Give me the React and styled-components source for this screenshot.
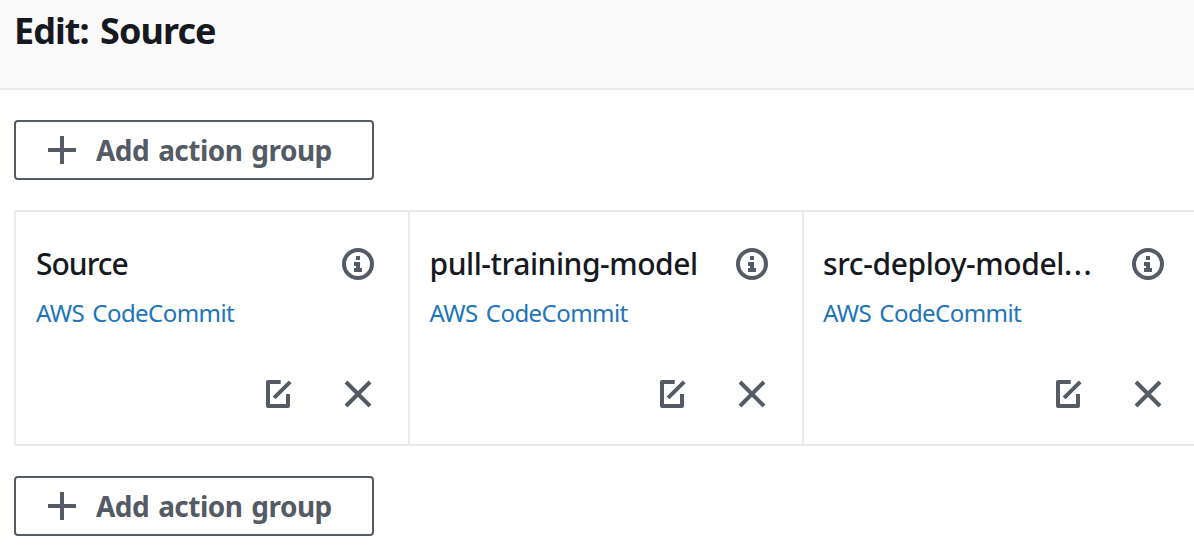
import React from 'react';
import styled, { createGlobalStyle } from 'styled-components';

const GlobalStyle = createGlobalStyle`
  * { box-sizing: border-box; }
  html, body { margin: 0; background: #fff; overflow: hidden; }
  body { font-family: "Noto Sans", "Open Sans", sans-serif; color: #16191f; }
`;

const Page = styled.div`
  width: 1194px;
  height: 560px;
  overflow: hidden;
`;

const Header = styled.header`
  height: 90px;
  padding: 1px 0 0 14px;
  background: #fafafa;
  border-bottom: 2px solid #eaeaea;
`;

const Title = styled.h1`
  margin: 0;
  font-size: 36px;
  line-height: 60px;
  font-weight: 700;
  letter-spacing: -0.95px;
  word-spacing: 3px;
  white-space: nowrap;
`;

const Stage = styled.main`
  display: flex;
  flex-direction: column;
  align-items: flex-start;
  gap: 30px;
  padding: 30px 0 0 14px;
`;

const AddButton = styled.button`
  display: flex;
  align-items: center;
  gap: 20px;
  width: 360px;
  height: 60px;
  padding: 0 0 0 32px;
  border: 2px solid #545b64;
  border-radius: 4px;
  background: #fff;
  color: #545b64;
  font: 700 28px/56px "Noto Sans", "Open Sans", sans-serif;
  letter-spacing: -0.53px;
  word-spacing: 2.2px;
  white-space: nowrap;
`;

const ActionGroup = styled.section`
  display: flex;
  flex: none;
  width: max-content;
  height: 236px;
  border: 2px solid #eaeaea;
  border-right: 0;
`;

const Card = styled.article`
  display: flex;
  flex-direction: column;
  width: ${(p) => p.$width}px;
  padding: 31px 34px 34px ${(p) => p.$inset}px;
  border-right: 2px solid #eaeaea;
`;

const CardTop = styled.div`
  display: flex;
  align-items: center;
  justify-content: space-between;
  height: 42px;
`;

const ActionName = styled.div`
  font-size: 30px;
  font-weight: 500;
  line-height: 42px;
  letter-spacing: ${(p) => p.$tracking}px;
  white-space: nowrap;
`;

const Ellipsis = styled.span`
  letter-spacing: 1.6px;
`;

const Provider = styled.a`
  margin-top: 12px;
  color: #2074b9;
  font-size: 24px;
  line-height: 32px;
  letter-spacing: -0.55px;
  word-spacing: 2.4px;
  white-space: nowrap;
`;

const CardTools = styled.div`
  display: flex;
  justify-content: flex-end;
  align-items: center;
  gap: 48px;
  margin-top: auto;
`;

const Icon = styled.svg`
  display: block;
  flex: none;
  fill: none;
  stroke: #545b64;
  stroke-width: 4;
`;

const PlusIcon = () => (
  <Icon width="28" height="28" viewBox="0 0 28 28">
    <path d="M14 0v28M0 14h28" />
  </Icon>
);

const InfoIcon = () => (
  <Icon width="32" height="32" viewBox="0 0 32 32">
    <circle cx="16" cy="16" r="14" />
    <path d="M14 8h4v4h-4zM12 14h6v6h2v4h-8v-4h2v-2h-2z" fill="#545b64" stroke="none" />
  </Icon>
);

const EditIcon = () => (
  <Icon width="32" height="32" viewBox="0 0 32 32" strokeLinejoin="round">
    <path d="M18.7 4H6v24h20V16" />
    <path d="M12.1 19.9 28.2 3.8" />
  </Icon>
);

const RemoveIcon = () => (
  <Icon width="32" height="32" viewBox="0 0 32 32">
    <path d="M4 4l24 24M28 4 4 28" />
  </Icon>
);

const AddGroup = () => (
  <AddButton type="button">
    <PlusIcon />
    <span>Add action group</span>
  </AddButton>
);

const actions = [
  { name: 'Source', width: 394, inset: 20, tracking: -1 },
  { name: 'pull-training-model', width: 394, inset: 19.5, tracking: -0.45 },
  { name: 'src-deploy-model', truncated: true, width: 396, inset: 19, tracking: -0.4 },
];

export default function App() {
  return (
    <Page>
      <GlobalStyle />
      <Header>
        <Title>Edit: Source</Title>
      </Header>
      <Stage>
        <AddGroup />
        <ActionGroup>
          {actions.map((a) => (
            <Card key={a.name} $width={a.width} $inset={a.inset}>
              <CardTop>
                <ActionName $tracking={a.tracking}>
                  {a.name}
                  {a.truncated && <Ellipsis>...</Ellipsis>}
                </ActionName>
                <InfoIcon />
              </CardTop>
              <Provider>AWS CodeCommit</Provider>
              <CardTools>
                <EditIcon />
                <RemoveIcon />
              </CardTools>
            </Card>
          ))}
        </ActionGroup>
        <AddGroup />
      </Stage>
    </Page>
  );
}
